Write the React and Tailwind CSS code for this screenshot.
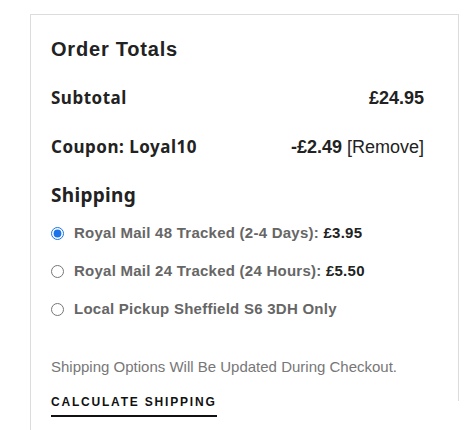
import React from "react";

const poppins = { fontFamily: '"Noto Sans", "Liberation Sans", sans-serif' };

function Radio({ checked, label, price }) {
  return (
    <label className="flex items-center h-[38px] gap-[10px]">
      <input
        type="radio"
        name="ship"
        defaultChecked={checked}
        className="m-0 w-[13px] h-[13px] accent-[#1a73e8]"
      />
      <span className="text-[15px] font-bold text-[#666] tracking-[0.25px]">
        {label}
        {price && <span className="text-[#222]"> {price}</span>}
      </span>
    </label>
  );
}

export default function App() {
  return (
    <div
      className="w-[468px] h-[430px] overflow-hidden bg-white"
      style={{ fontFamily: '"Liberation Sans", Arial, sans-serif' }}
    >
      <div className="ml-[30px] mt-[14px] w-[429px] border-l border-t border-[#dcdcdc] flex">
        <div className="flex-1 pl-[20px] pr-[34px] pt-[22px]">
          <h2 className="text-[20px] font-bold text-[#222] tracking-[0.8px] leading-[24px]">
            Order Totals
          </h2>
          <div className="mt-[25px] flex justify-between items-center h-[24px]">
            <span className="text-[17px] font-bold text-[#222] tracking-[0.5px]" style={poppins}>
              Subtotal
            </span>
            <span className="text-[18px] font-bold text-[#222]">£24.95</span>
          </div>
          <div className="mt-[25px] flex justify-between items-center h-[24px]">
            <span className="text-[17px] font-bold text-[#222] tracking-[0.5px]" style={poppins}>
              Coupon: Loyal10
            </span>
            <span className="text-[18px] text-[#222]">
              <span className="font-bold">-£2.49</span> [Remove]
            </span>
          </div>
          <div className="mt-[24px] h-[24px] flex items-center">
            <span className="text-[19px] font-bold text-[#222] tracking-[0.3px]" style={poppins}>
              Shipping
            </span>
          </div>
          <div className="mt-[7px] flex flex-col">
            <Radio checked label="Royal Mail 48 Tracked (2-4 Days):" price="£3.95" />
            <Radio label="Royal Mail 24 Tracked (24 Hours):" price="£5.50" />
            <Radio label="Local Pickup Sheffield S6 3DH Only" />
          </div>
          <p className="mt-[29px] text-[15px] text-[#777] leading-[20px]">
            Shipping Options Will Be Updated During Checkout.
          </p>
          <div className="mt-[12px]">
            <span className="inline-block text-[12px] font-bold text-[#111] tracking-[1.8px] pb-[6px] border-b-2 border-[#111] leading-[14px]">
              CALCULATE SHIPPING
            </span>
          </div>
          <div className="mt-[8px] flex justify-end pr-[8px]">
            <span className="text-[15px] font-bold text-[#222] tracking-[1px]">My Cart</span>
          </div>
        </div>
        <div className="w-px h-[386px] bg-[#dcdcdc]" />
      </div>
    </div>
  );
}
